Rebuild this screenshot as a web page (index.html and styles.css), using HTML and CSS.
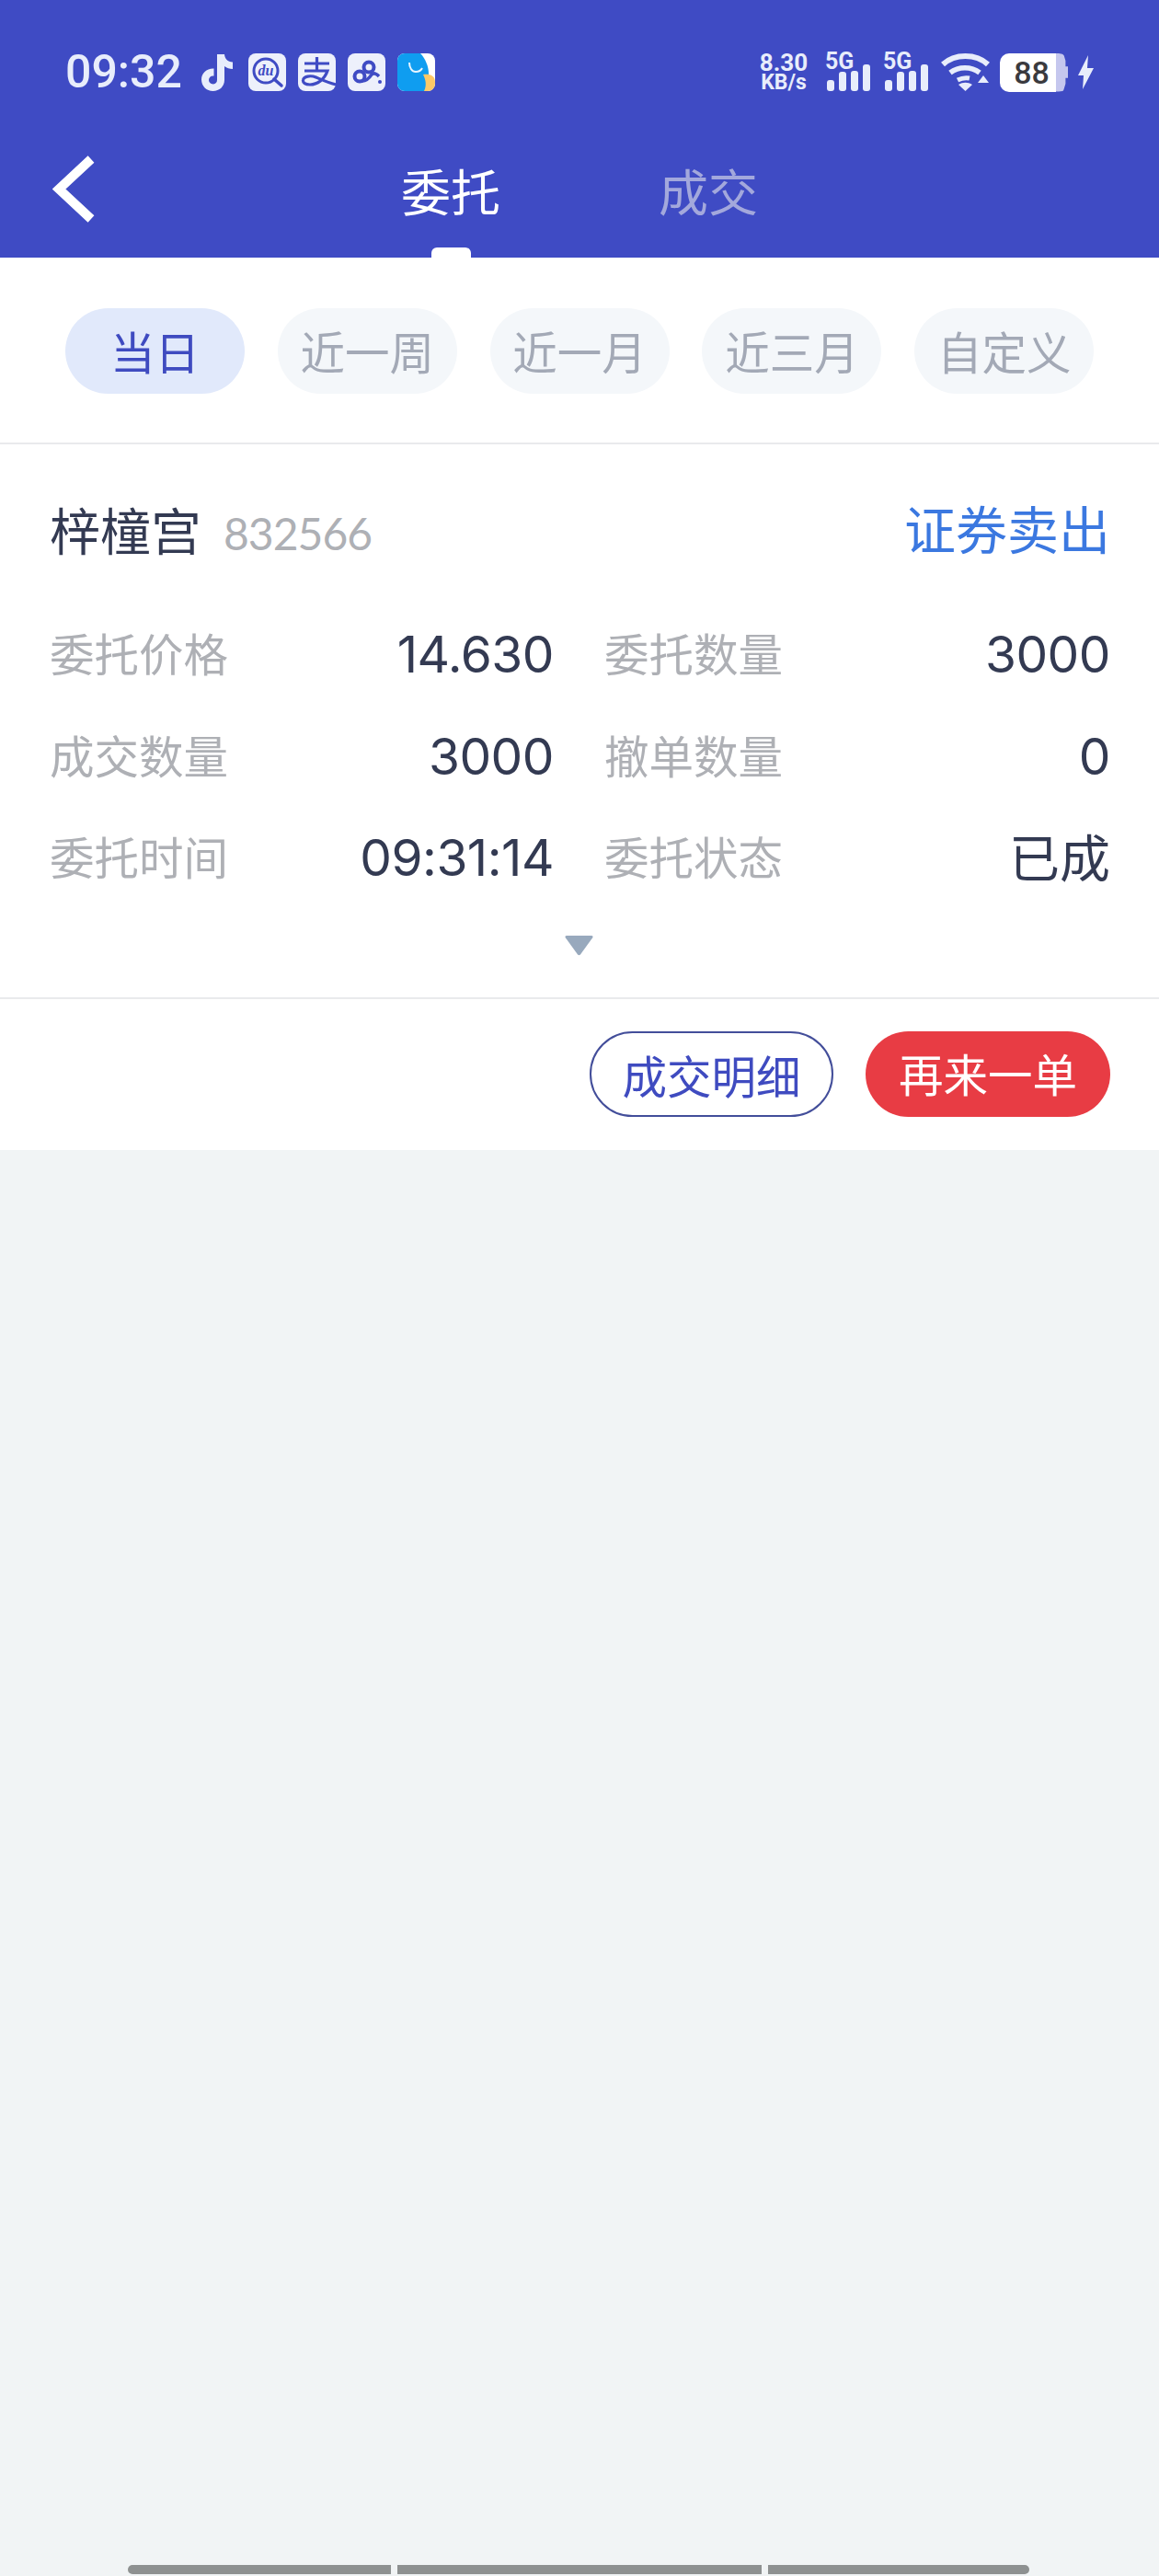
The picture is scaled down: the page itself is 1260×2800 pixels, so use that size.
FILE: index.html
```html
<!DOCTYPE html>
<html lang="zh-CN">
<head>
<meta charset="utf-8">
<title>委托</title>
<link rel="stylesheet" href="styles.css">
</head>
<body>
<div class="screen">
  <header class="top">
    <div class="status">
      <span class="time">09:32</span>
      <svg class="tiktok" viewBox="0 0 36 40"><path fill="#e8edfb" d="M18 0h8c.4 5 3.400 8 9 8.500v7.500c-3.500 0-6.500-1-9-3v15c0 7-5.500 12-12.500 12S1 34.500 1 27.500 7 15 14.500 15.500v8c-3-.5-5.500 1.500-5.500 4.300 0 2.700 2.200 4.700 4.800 4.700 2.700 0 4.200-2 4.200-4.700z"/></svg>
      <svg class="app" viewBox="0 0 41 41"><rect width="41" height="41" rx="8" fill="#edf0fb"/><circle cx="19" cy="19" r="13" fill="none" stroke="#3f4bc4" stroke-width="3"/><path d="M28 28l8 7" stroke="#3f4bc4" stroke-width="3.500" stroke-linecap="round"/><text x="19" y="24" class="du">du</text></svg>
      <svg class="app" viewBox="0 0 41 41"><rect width="41" height="41" rx="8" fill="#edf0fb"/><path d="M7 11h27M20.500 4v14M7 19h25c-3 9-11 15-19 15-5 0-8-2-7.500-5 .5-4 8-5.500 14-3 5 2 13 6 22 8" fill="none" stroke="#3f4bc4" stroke-width="3.200"/></svg>
      <svg class="app" viewBox="0 0 41 41"><rect width="41" height="41" rx="8" fill="#edf0fb"/><circle cx="13" cy="25" r="5.500" fill="none" stroke="#3f4bc4" stroke-width="4"/><circle cx="23" cy="15" r="5.500" fill="none" stroke="#3f4bc4" stroke-width="4"/><path d="M16 30c5 0 8-4 10-7 2-2 5-1 8 2" fill="none" stroke="#3f4bc4" stroke-width="3.500"/><circle cx="35" cy="31" r="2" fill="#3f4bc4"/></svg>
      <svg class="app last" viewBox="0 0 41 41"><rect width="41" height="41" rx="8" fill="#fff"/><path d="M8 0h17c5 5 9 14 9 22 0 8-1 14-4 19H8a8 8 0 0 1-8-8V8a8 8 0 0 1 8-8z" fill="#0f9df0"/><path d="M28 23c7-1 13 1 13 8v2a8 8 0 0 1-8 8h-4c3-6 2-12-1-18z" fill="#fdc966"/><path d="M13 10c0 6 3 10 7 10s6-2 7-4" fill="none" stroke="#e8f5ff" stroke-width="2"/></svg>
      <span class="spacer"></span>
      <span class="speed"><b>8.30</b><i>KB/s</i></span>
      <span class="signal"><b>5G</b><svg viewBox="0 0 47 29"><rect y="17" width="8" height="12" rx="3"/><rect x="13" y="8" width="8" height="21" rx="3"/><rect x="26" y="7" width="8" height="22" rx="3"/><rect x="39" width="8" height="29" rx="3"/></svg></span>
      <span class="signal"><b>5G</b><svg viewBox="0 0 47 29"><rect y="17" width="8" height="12" rx="3"/><rect x="13" y="8" width="8" height="21" rx="3"/><rect x="26" y="7" width="8" height="22" rx="3"/><rect x="39" width="8" height="29" rx="3"/></svg></span>
      <svg class="wifi" viewBox="0 0 53 41"><path d="M2 12C15 0 38 0 51 12" fill="none" stroke="#e8edfb" stroke-width="6"/><path d="M10 21c9-7 23-7 32 0" fill="none" stroke="#e8edfb" stroke-width="5.500"/><path d="M18 29c4-2 8-3 13-2" fill="none" stroke="#e8edfb" stroke-width="5"/><path d="M19 34c5-3 10-3 15 0l-7.500 7z" fill="#e8edfb"/><path d="M40 32l6-8 6 8z" fill="#e8edfb"/></svg>
      <span class="battery"><span class="level">88</span><span class="rest"></span></span>
      <svg class="bolt" viewBox="0 0 17 37"><path d="M11 0L0 22h6L5 37l12-23h-7z" fill="#e8edfb"/></svg>
    </div>
    <nav class="nav">
      <svg class="back" viewBox="0 0 46 73"><path d="M42 4L7 36.500 42 69" fill="none" stroke="#fff" stroke-width="10"/></svg>
      <div class="tabs">
        <span class="tab on">委托</span>
        <span class="tab">成交</span>
      </div>
    </nav>
  </header>

  <section class="filters">
    <span class="pill on">当日</span>
    <span class="pill">近一周</span>
    <span class="pill">近一月</span>
    <span class="pill">近三月</span>
    <span class="pill">自定义</span>
  </section>

  <section class="card">
    <div class="title">
      <span class="name">梓橦宫</span>
      <span class="code">832566</span>
      <span class="side">证券卖出</span>
    </div>
    <div class="grid">
      <div class="cell"><span class="label">委托价格</span><span class="value">14.630</span></div>
      <div class="cell"><span class="label">委托数量</span><span class="value">3000</span></div>
      <div class="cell"><span class="label">成交数量</span><span class="value">3000</span></div>
      <div class="cell"><span class="label">撤单数量</span><span class="value">0</span></div>
      <div class="cell"><span class="label">委托时间</span><span class="value">09:31:14</span></div>
      <div class="cell"><span class="label">委托状态</span><span class="value cjk">已成</span></div>
    </div>
    <div class="more"><svg viewBox="0 0 31 22"><path d="M2 0h27c1.500 0 2 1 1.200 2.300L17 20.500c-.8 1-2.200 1-3 0L.8 2.300C0 1 .5 0 2 0z" fill="#98a9bd"/></svg></div>
    <div class="actions">
      <span class="btn outline">成交明细</span>
      <span class="btn red">再来一单</span>
    </div>
  </section>

  <div class="fill">
    <div class="home"><span class="seg a"></span><span class="seg b"></span><span class="seg c"></span></div>
  </div>
</div>
</body>
</html>
```
FILE: styles.css
```css
* { box-sizing: border-box; }
html, body { margin: 0; padding: 0; }
body { font-family: "Noto Sans CJK SC", "Noto Sans", sans-serif; }
.screen { width: 1260px; height: 2800px; display: flex; flex-direction: column; background: #f1f4f5; overflow: hidden; }

.top { height: 280px; background: #3f4bc4; display: flex; flex-direction: column; }
.status { height: 41px; margin-top: 58px; padding: 0 71px 0 71px; display: flex; align-items: center; color: #e8edfb; }
.time { font: 500 50px/41px Roboto, sans-serif; width: 124px; margin-right: 23px; white-space: nowrap; }
.tiktok { width: 36px; height: 40px; margin-right: 16px; }
.app { width: 41px; height: 41px; margin-right: 13px; }
.du { font: italic 700 16px "Liberation Serif", serif; fill: #3f4bc4; text-anchor: middle; }
.spacer { flex: 1; }
.speed { width: 54px; margin-right: 20px; display: flex; flex-direction: column; align-items: center; font-family: Roboto, sans-serif; }
.speed b { font-size: 26px; line-height: 22px; font-weight: 700; }
.speed i { font-size: 23px; line-height: 22px; font-style: normal; font-weight: 700; }
.signal { width: 47px; height: 41px; margin-right: 16px; position: relative; font-family: Roboto, sans-serif; }
.signal b { position: absolute; left: -2px; top: -4px; font-size: 25px; line-height: 26px; font-weight: 700; }
.signal svg { position: absolute; left: 0; bottom: 0; width: 47px; height: 29px; fill: #e8edfb; }
.wifi { width: 53px; height: 41px; margin-left: -2px; margin-right: 11px; }
.battery { width: 74px; height: 42px; display: flex; }
.level { width: 61px; padding-left: 8px; background: #fff; border-radius: 10px 0 0 10px; color: #3a3a3e; font: 500 34px/42px Roboto, sans-serif; text-align: center; }
.rest { width: 13px; background: #c5c7ee; border-radius: 0 10px 10px 0; clip-path: polygon(0 0, 60% 0, 80% 20%, 80% 35%, 100% 35%, 100% 65%, 80% 65%, 80% 80%, 60% 100%, 0 100%); }
.bolt { width: 17px; height: 37px; margin-left: 11px; }

.nav { flex: 1; display: flex; padding-left: 57px; }
.back { width: 46px; height: 73px; margin-top: 70px; }
.tabs { margin-left: 333px; display: flex; gap: 172px; }
.tab { font-size: 54px; line-height: 54px; color: #a3a8dc; margin-top: 81px; height: 100px; position: relative; width: 108px; text-align: center; }
.tab.on { color: #fff; }
.tab.on::after { content: ""; position: absolute; left: 33px; bottom: 0; width: 43px; height: 11px; background: #fff; border-radius: 6px 6px 0 0; }

.filters { height: 203px; background: #fff; border-bottom: 2px solid #e9eaec; padding: 55px 0 0 71px; display: flex; gap: 35.800px; }
.pill { width: 195px; height: 93px; border-radius: 47px; background: #f4f7fa; color: #a3a9b6; font-size: 48.500px; line-height: 93px; text-align: center; }
.pill.on { background: #e1e9fb; color: #3f4bc0; }

.card { background: #fff; display: flex; flex-direction: column; height: 767px; }
.title { height: 121px; padding: 61px 53px 0 54px; display: flex; align-items: center; }
.name { font-size: 55px; line-height: 60px; color: #333a52; }
.code { font: 400 48px/60px Lato, sans-serif; letter-spacing: -1px; color: #aeb0b5; margin-left: 24px; margin-top: 11px; }
.side { margin-left: auto; margin-bottom: 2px; font-size: 56px; line-height: 60px; color: #3b78e0; }
.grid { display: grid; grid-template-columns: 548px 550px; column-gap: 55px; padding: 0 53px 0 54px; margin-top: 77px; }
.cell { height: 110.500px; display: flex; justify-content: space-between; align-items: flex-start; }
.label { font-size: 48.500px; line-height: 60px; color: #aeb0b5; margin-top: -2px; }
.value { font: 400 55px/60px Inter, sans-serif; letter-spacing: -0.5px; color: #333a52; }
.value.cjk { font: 400 55px/60px "Noto Sans CJK SC", sans-serif; letter-spacing: 0; margin-top: -3px; }
.more { height: 71px; padding-top: 4px; display: flex; justify-content: center; }
.more svg { width: 31px; height: 22px; margin-left: -2px; }
.actions { border-top: 2px solid #e9eaec; padding: 35px 53px 0 0; display: flex; justify-content: flex-end; gap: 35px; }
.btn { width: 265px; height: 93px; border-radius: 47px; font-size: 48.500px; line-height: 91px; text-align: center; }
.outline { border: 2px solid #434e9a; color: #3f4bc0; }
.red { width: 266px; background: #e83c44; color: #fff; }

.fill { flex: 1; position: relative; }
.home { position: absolute; left: 139px; top: 1538px; display: flex; gap: 7px; }
.seg { height: 10px; background: #8e9191; }
.seg.a { width: 286px; border-radius: 5px 0 0 5px; }
.seg.b { width: 396px; }
.seg.c { width: 284px; border-radius: 0 5px 5px 0; }
```
